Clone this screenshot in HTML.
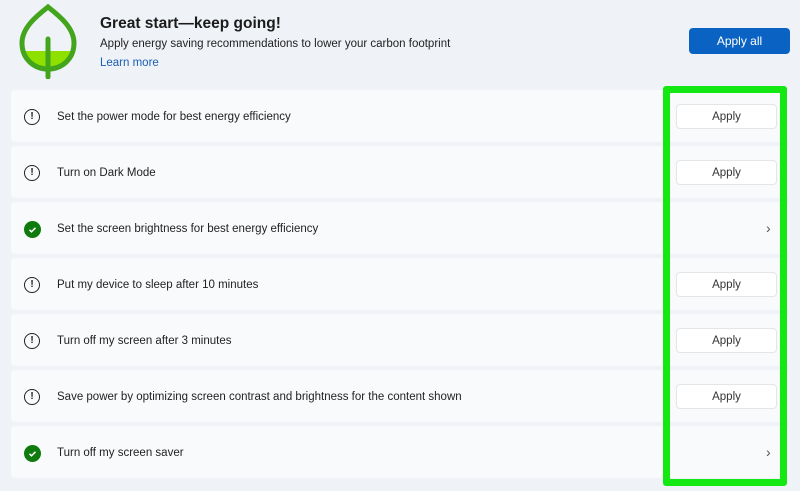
<!DOCTYPE html>
<html><head><style>
body{margin:0;width:800px;height:491px;background:#eff2f7;font-family:"Liberation Sans",sans-serif;position:relative;overflow:hidden;color:#1b1b1b}
.t{position:absolute;left:100px;top:15px;font-size:15.5px;font-weight:bold}
.s{position:absolute;left:100px;top:38px;font-size:11.5px;color:#222}
.l{position:absolute;left:100px;top:57px;font-size:11.5px;color:#1a5fb4}
.all{position:absolute;left:689px;top:28px;width:101px;height:26px;background:#0a63c2;border-radius:4px;color:#fff;font-size:12px;text-align:center;line-height:26px}
.row{position:absolute;left:11px;width:778px;height:52px;background:#f9fafc;border-radius:4px}
.row .tx{position:absolute;left:46px;top:21px;font-size:11.5px;color:#222}
.ic{position:absolute;left:13px;top:19px;width:16px;height:16px;border:1.5px solid #222;border-radius:50%;box-sizing:border-box;font-size:10px;font-weight:bold;text-align:center;line-height:13px}
.ok{position:absolute;left:13px;top:19px;width:17px;height:17px;background:#0f7b0f;border-radius:50%}
.btn{position:absolute;left:665px;top:14px;width:101px;height:25px;background:#fff;border:1px solid #e3e5e8;border-radius:4px;box-sizing:border-box;font-size:11.5px;text-align:center;line-height:24px;color:#333}
.ch{position:absolute;left:755px;top:18px;font-size:14px;color:#555}
.g{position:absolute;left:663px;top:86px;width:124px;height:400px;border:7px solid #13e813;box-sizing:border-box;border-radius:3px}
</style></head><body>
<svg style="position:absolute;left:18px;top:3px" width="60" height="76" viewBox="0 0 60 76">
<defs><clipPath id="c"><path d="M30 4 C20 12 4 24 4 40 C4 56 16 66 30 66 C44 66 56 56 56 40 C56 24 40 12 30 4Z"/></clipPath></defs>
<rect x="0" y="48" width="60" height="20" fill="#8ee000" clip-path="url(#c)"/>
<path d="M30 4 C20 12 4 24 4 40 C4 56 16 66 30 66 C44 66 56 56 56 40 C56 24 40 12 30 4Z" fill="none" stroke="#43a51c" stroke-width="5"/>
<line x1="30" y1="36" x2="30" y2="74" stroke="#43a51c" stroke-width="5" stroke-linecap="round"/>
</svg>
<div class="t">Great start—keep going!</div>
<div class="s">Apply energy saving recommendations to lower your carbon footprint</div>
<div class="l">Learn more</div>
<div class="all">Apply all</div>

<div class="row" style="top:90px"><div class="ic">!</div><div class="tx">Set the power mode for best energy efficiency</div><div class="btn">Apply</div></div>
<div class="row" style="top:146px"><div class="ic">!</div><div class="tx">Turn on Dark Mode</div><div class="btn">Apply</div></div>
<div class="row" style="top:202px"><div class="ok"><svg width="17" height="17"><path d="M5.5 8.8l2 2 4-4" stroke="#fff" stroke-width="1.5" fill="none"/></svg></div><div class="tx">Set the screen brightness for best energy efficiency</div><div class="ch">›</div></div>
<div class="row" style="top:258px"><div class="ic">!</div><div class="tx">Put my device to sleep after 10 minutes</div><div class="btn">Apply</div></div>
<div class="row" style="top:314px"><div class="ic">!</div><div class="tx">Turn off my screen after 3 minutes</div><div class="btn">Apply</div></div>
<div class="row" style="top:370px"><div class="ic">!</div><div class="tx">Save power by optimizing screen contrast and brightness for the content shown</div><div class="btn">Apply</div></div>
<div class="row" style="top:426px"><div class="ok"><svg width="17" height="17"><path d="M5.5 8.8l2 2 4-4" stroke="#fff" stroke-width="1.5" fill="none"/></svg></div><div class="tx">Turn off my screen saver</div><div class="ch">›</div></div>
<div class="g"></div>
</body></html>
